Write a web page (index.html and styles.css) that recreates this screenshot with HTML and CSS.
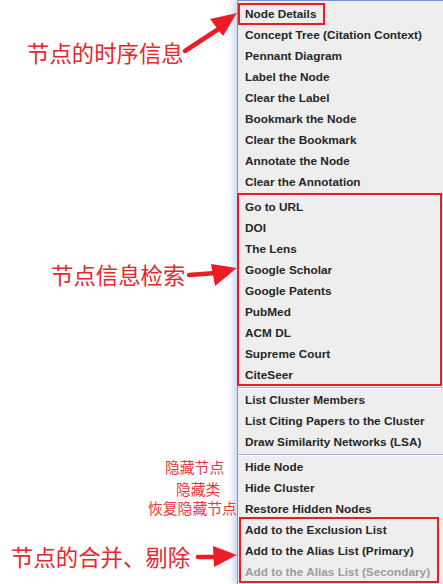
FILE: index.html
```html
<!DOCTYPE html>
<html lang="zh">
<head>
<meta charset="utf-8">
<title>Node menu</title>
<link rel="stylesheet" href="styles.css">
</head>
<body>
<div class="page">
  <div class="notes">
    <svg class="arrows" width="237" height="584" viewBox="0 0 237 584">
      <line x1="185" y1="51" x2="220" y2="28" class="shaft"/>
      <polygon points="237,13 223,36 210,19" class="head"/>
      <line x1="189" y1="275" x2="216" y2="273" class="shaft"/>
      <polygon points="237,268 211,264 215,286" class="head"/>
      <line x1="198" y1="557" x2="216" y2="557" class="shaft"/>
      <polygon points="237,555 213,546 214,567" class="head"/>
    </svg>
    <div class="note big n1">节点的时序信息</div>
    <div class="note big n2">节点信息检索</div>
    <div class="note small s1">隐藏节点</div>
    <div class="note small s2">隐藏类</div>
    <div class="note small s3">恢复隐藏节点</div>
    <div class="note big n3">节点的合并、剔除</div>
  </div>
  <div class="menu">
    <div class="item first-boxed">Node Details</div>
    <div class="item">Concept Tree (Citation Context)</div>
    <div class="item">Pennant Diagram</div>
    <div class="item">Label the Node</div>
    <div class="item">Clear the Label</div>
    <div class="item">Bookmark the Node</div>
    <div class="item">Clear the Bookmark</div>
    <div class="item">Annotate the Node</div>
    <div class="item">Clear the Annotation</div>
    <div class="sep"></div>
    <div class="group search-box">
      <div class="item">Go to URL</div>
      <div class="item">DOI</div>
      <div class="item">The Lens</div>
      <div class="item">Google Scholar</div>
      <div class="item">Google Patents</div>
      <div class="item">PubMed</div>
      <div class="item">ACM DL</div>
      <div class="item">Supreme Court</div>
      <div class="item">CiteSeer</div>
    </div>
    <div class="sep"></div>
    <div class="item">List Cluster Members</div>
    <div class="item">List Citing Papers to the Cluster</div>
    <div class="item">Draw Similarity Networks (LSA)</div>
    <div class="sep"></div>
    <div class="item">Hide Node</div>
    <div class="item">Hide Cluster</div>
    <div class="item">Restore Hidden Nodes</div>
    <div class="group merge-box">
      <div class="item">Add to the Exclusion List</div>
      <div class="item">Add to the Alias List (Primary)</div>
      <div class="item disabled">Add to the Alias List (Secondary)</div>
    </div>
  </div>
</div>
</body>
</html>
```

FILE: styles.css
```css
html, body {
  margin: 0;
  padding: 0;
  background: #ffffff;
}

.page {
  display: flex;
  width: 443px;
  height: 584px;
  overflow: hidden;
}

.notes {
  position: relative;
  width: 237px;
  flex: 0 0 237px;
  font-family: "Noto Sans CJK SC", "Noto Sans", sans-serif;
  color: #e8262d;
}

.arrows {
  position: absolute;
  left: 0;
  top: 0;
}

.shaft {
  stroke: #ec1c24;
  stroke-width: 4.5;
  stroke-linecap: round;
}

.head {
  fill: #ec1c24;
}

.note {
  position: absolute;
  white-space: nowrap;
}

.big {
  font-size: 22.4px;
  line-height: 24px;
}

.small {
  font-size: 14.8px;
  line-height: 16px;
  color: #e63a3f;
}

.n1 { left: 27px; top: 40px; }
.n2 { left: 51px; top: 262px; }
.n3 { left: 11px; top: 544px; }
.s1 { left: 165px; top: 459px; }
.s2 { left: 176px; top: 481px; }
.s3 { left: 148px; top: 500px; }

.menu {
  flex: 1;
  position: relative;
  background: #eeeeee;
  border-left: 1px solid #7b96cf;
  border-top: 1px solid #7b96cf;
  padding-top: 3px;
  box-shadow: -4px 0 6px rgba(110, 145, 220, 0.35);
  font-family: "Liberation Sans", Arial, sans-serif;
  font-weight: bold;
  font-size: 11.8px;
}

.item {
  position: relative;
  height: 21px;
  line-height: 20px;
  padding-left: 7px;
  color: #262626;
  white-space: nowrap;
}

.item.disabled {
  color: #9c9c9c;
}

.sep {
  height: 1px;
  margin: 1px 0;
  border-top: 1px solid #a3b3d6;
  background: #ffffff;
}

.group {
  position: relative;
}

.first-boxed::after {
  content: "";
  position: absolute;
  left: 0;
  top: -1px;
  width: 83px;
  height: 18px;
  border: 2px solid #ec1c24;
}

.search-box::after {
  content: "";
  position: absolute;
  left: -1px;
  right: 1px;
  top: -4px;
  bottom: 0;
  border: 2px solid #ec1c24;
}

.merge-box::after {
  content: "";
  position: absolute;
  left: 1px;
  right: 4px;
  top: -3px;
  bottom: 0;
  border: 2px solid #ec1c24;
}
```
